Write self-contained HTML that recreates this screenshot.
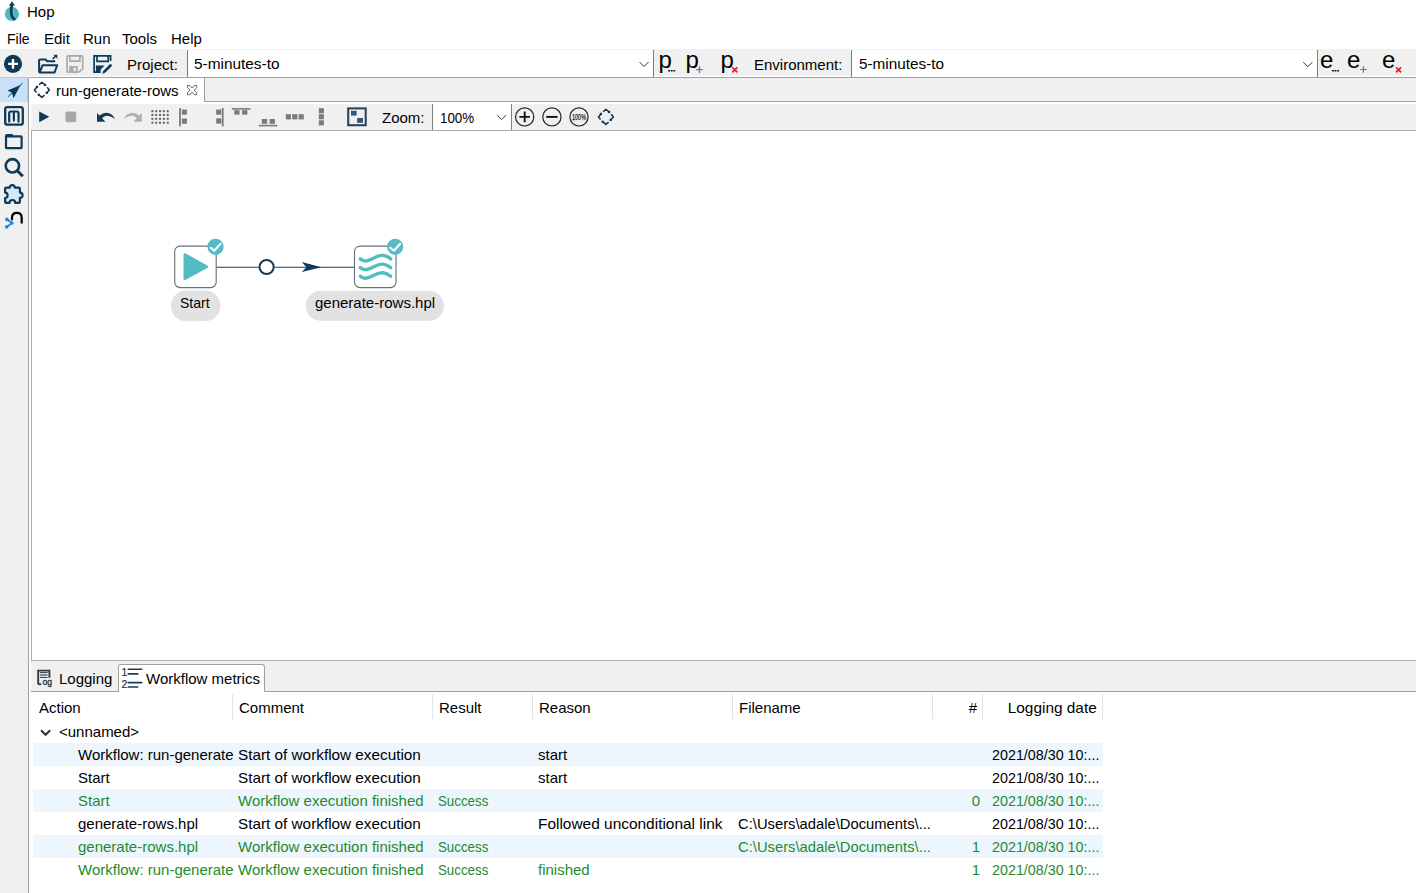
<!DOCTYPE html>
<html><head><meta charset="utf-8">
<style>
*{box-sizing:border-box}
html,body{margin:0;padding:0;width:1416px;height:893px;overflow:hidden;background:#fff;font-family:"Liberation Sans",sans-serif;font-size:15px;color:#000}
.a{position:absolute}
.t{position:absolute;white-space:pre;line-height:17px;font-size:15px;color:#000}
svg{position:absolute;overflow:visible}
.g{color:#1f8a30}
.big{position:absolute;white-space:pre;font-size:24px;line-height:28px;color:#000}
.rowb{position:absolute;left:33px;width:1070px;height:23px;background:#eef6fd}
.sep{position:absolute;top:694px;width:1px;height:25px;background:#e3e3e3}
.sx{transform-origin:0 0}
.clip{position:absolute;overflow:hidden;white-space:pre;height:23px}
</style></head><body>
<!-- ===== title bar ===== -->
<svg style="left:0;top:0" width="24" height="24" viewBox="0 0 24 24">
  <circle cx="11.9" cy="13.9" r="7.1" fill="#4fb9c2"/>
  <path d="M11.8 5 C11 9 10.9 13 11.8 16 C12.5 18 13.6 19 15.3 19.7" fill="none" stroke="#0e3a5a" stroke-width="2.5"/>
  <path d="M8.9 5.8 L12 1.3 L14.9 5.8 Z" fill="#0e3a5a"/>
</svg>
<div class="t" style="left:27px;top:3px">Hop</div>
<!-- ===== menu ===== -->
<div class="t" style="left:7px;top:30px;transform:scaleX(0.935);transform-origin:0 0">File</div>
<div class="t" style="left:44px;top:30px">Edit</div>
<div class="t" style="left:83px;top:30px">Run</div>
<div class="t" style="left:122px;top:30px">Tools</div>
<div class="t" style="left:171px;top:30px">Help</div>

<!-- ===== main toolbar ===== -->
<div class="a" style="left:0;top:49px;width:1416px;height:27px;background:#f0f0f0"></div>
<div class="a" style="left:187px;top:50px;width:467px;height:27px;background:#fff;border-left:1px solid #7d7d7d;border-right:1px solid #7d7d7d"></div>
<div class="a" style="left:851px;top:50px;width:467px;height:27px;background:#fff;border-left:1px solid #7d7d7d;border-right:1px solid #7d7d7d"></div>
<div class="t" style="left:127px;top:56px">Project:</div>
<div class="t" style="left:194px;top:55px;transform:scaleX(1.025);transform-origin:0 0">5-minutes-to</div>
<div class="t" style="left:754px;top:56px">Environment:</div>
<div class="t" style="left:858.5px;top:55px;transform:scaleX(1.02);transform-origin:0 0">5-minutes-to</div>
<svg style="left:0;top:49px" width="28" height="28" viewBox="0 49 28 28">
  <circle cx="13" cy="63.9" r="9.1" fill="#0e3a5a"/>
  <path d="M13 59 V68.8 M8.1 63.9 H17.9" stroke="#fff" stroke-width="2.4"/>
</svg>
<svg style="left:34px;top:50px" width="28" height="28" viewBox="34 50 28 28">
  <path d="M39.1 72.5 V60.3 Q39.1 59.4 40 59.4 H45.6 L47.2 61.3 H55.2" fill="none" stroke="#0e3a5a" stroke-width="2" stroke-linejoin="round"/>
  <path d="M42.6 65.2 H57.2 L54.6 72.5 H39.6 Z" fill="none" stroke="#0e3a5a" stroke-width="2" stroke-linejoin="round"/>
  <path d="M52.6 59 L56.2 55.6" stroke="#0e3a5a" stroke-width="1.6"/>
  <path d="M53.4 54.7 H57.4 V58.7 Z" fill="#0e3a5a"/>
</svg>
<svg style="left:62px;top:50px" width="28" height="28" viewBox="62 50 28 28">
  <path d="M67.1 56.8 Q67.1 55.9 68 55.9 H81.8 Q82.7 55.9 82.7 56.8 V68.9 L78.9 72 H67.1 Z" fill="none" stroke="#a8a8a8" stroke-width="1.6" stroke-linejoin="round"/>
  <path d="M70 55.9 V61.1 H79.9 V55.9" fill="none" stroke="#a8a8a8" stroke-width="1.6"/>
  <path d="M69.3 66 H77.8 V72.7 H69.3 Z" fill="#a8a8a8"/>
  <path d="M73.4 67.6 H76.2 V71.2 H73.4 Z" fill="#e6e6e6"/>
</svg>
<svg style="left:90px;top:50px" width="28" height="28" viewBox="90 50 28 28">
  <path d="M100.2 72.1 H94.1 V55.9 H110.6 V61" fill="none" stroke="#0e3a5a" stroke-width="1.7"/>
  <path d="M97 55.9 V61.3 H108.2 V55.9" fill="none" stroke="#0e3a5a" stroke-width="1.7"/>
  <path d="M95.9 65.6 H104.6 L100.6 69.8 V72.9 H95.9 Z" fill="#0e3a5a"/>
  <path d="M104.4 71.6 L110.5 65.5" stroke="#0e3a5a" stroke-width="2.7" stroke-linecap="round"/>
  <path d="M102.3 73.8 L103 71.2 L104.9 73.1 Z" fill="#0e3a5a"/>
</svg>
<svg style="left:636px;top:58px" width="14" height="12" viewBox="636 58 14 12">
  <path d="M639.5 62 L644 66.5 L648.5 62" fill="none" stroke="#333" stroke-width="1"/>
</svg>
<svg style="left:1300px;top:58px" width="14" height="12" viewBox="1300 58 14 12">
  <path d="M1303.3 62.2 L1307.8 66.7 L1312.3 62.2" fill="none" stroke="#333" stroke-width="1"/>
</svg>
<!-- p icons -->
<div class="big" style="left:658.5px;top:46px">p</div>
<div class="big" style="left:685.5px;top:46px">p</div>
<div class="big" style="left:720.5px;top:46px">p</div>
<div class="big" style="left:1320px;top:46px">e</div>
<div class="big" style="left:1347px;top:46px">e</div>
<div class="big" style="left:1382px;top:46px">e</div>
<svg style="left:660px;top:60px" width="90" height="16" viewBox="660 60 90 16">
  <path d="M668.2 70 h1.8 v1.6 h-1.8z M670.8 70 h1.8 v1.6 h-1.8z M673.4 70 h1.8 v1.6 h-1.8z" fill="#111"/>
  <path d="M699.5 66.3 V72.9 M696.2 69.6 H702.8" stroke="#5b7b95" stroke-width="1.2"/>
  <path d="M732.2 67.4 L737.4 72.4 M737.4 67.4 L732.2 72.4" stroke="#e0202f" stroke-width="1.7"/>
</svg>
<svg style="left:1320px;top:60px" width="90" height="16" viewBox="1320 60 90 16">
  <path d="M1332 70 h1.8 v1.6 h-1.8z M1334.6 70 h1.8 v1.6 h-1.8z M1337.2 70 h1.8 v1.6 h-1.8z" fill="#111"/>
  <path d="M1363.4 66.2 V72.8 M1360.1 69.5 H1366.7" stroke="#5b7b95" stroke-width="1.2"/>
  <path d="M1396 67.4 L1401.2 72.4 M1401.2 67.4 L1396 72.4" stroke="#e0202f" stroke-width="1.7"/>
</svg>

<!-- ===== perspective bar ===== -->
<div class="a" style="left:0;top:76px;width:28px;height:817px;background:#f0f0f0"></div>
<div class="a" style="left:28px;top:78px;width:1px;height:815px;background:#a0a0a0"></div>
<div class="a" style="left:0;top:77px;width:28px;height:25px;background:#c8e1f6;border-top:1px solid #a9cdec;border-right:1px solid #a9cdec"></div>
<svg style="left:0;top:77px" width="28" height="28" viewBox="0 77 28 28">
  <path d="M22.6 83 L7.9 96.9" stroke="#0e3a5a" stroke-width="0.9"/>
  <path d="M20.6 85 L7.5 90.5 L11.9 92.7 L13.5 98.3 Z" fill="#0e3a5a"/>
</svg>
<svg style="left:0;top:104px" width="28" height="126" viewBox="0 104 28 126">
  <rect x="5.2" y="107.1" width="17.6" height="17.5" rx="2.2" fill="none" stroke="#0e3a5a" stroke-width="2.3"/>
  <path d="M9.2 121.6 V113.2 Q9.2 111.5 10.9 111.5 H16.8 Q18.5 111.5 18.5 113.2 V121.6 M13.85 111.5 V120.6" fill="none" stroke="#0e3a5a" stroke-width="2.2" stroke-linecap="round"/>
  <path d="M6 136.5 V135.8 Q6 135 6.9 135 H11.8 L13 136.4 H21 Q21.6 136.4 21.6 137 V147.4 Q21.6 148.1 21 148.1 H6.7 Q6 148.1 6 147.4 Z" fill="none" stroke="#0e3a5a" stroke-width="2.2" stroke-linejoin="round"/>
  <path d="M6 136.4 H13" stroke="#0e3a5a" stroke-width="2.2"/>
  <circle cx="12.4" cy="165.8" r="6.7" fill="none" stroke="#0e3a5a" stroke-width="2.6"/>
  <path d="M17.4 170.8 L22.8 176.3" stroke="#0e3a5a" stroke-width="3"/>
  <path d="M9.8 187.6 Q9.8 185.2 12.3 185.2 Q14.8 185.2 14.8 187.6 H18.8 Q19.9 187.6 19.9 188.7 V192.6 Q22.6 192.6 22.6 195.2 Q22.6 197.8 19.9 197.8 V201.7 Q19.9 202.8 18.8 202.8 H15.2 Q15.2 200 12.4 200 Q9.6 200 9.6 202.8 H6.2 Q5.1 202.8 5.1 201.7 V198 Q7.6 198 7.6 195.3 Q7.6 192.6 5.1 192.6 V188.7 Q5.1 187.6 6.2 187.6 Z" fill="#d3e9f8" stroke="#0e3a5a" stroke-width="2.2" stroke-linejoin="round"/>
  <path d="M12 220.2 V217.6 Q12 212.9 16.9 212.9 Q21.7 212.9 21.7 217.6 V223.6" fill="none" stroke="#000" stroke-width="2.2"/>
  <path d="M6.9 219.4 L12 223 L6.7 226.9" fill="none" stroke="#1e88e5" stroke-width="1.9"/>
  <circle cx="6.9" cy="219.4" r="1.8" fill="#1e88e5"/>
  <circle cx="11.9" cy="223" r="1.7" fill="#1e88e5"/>
  <circle cx="6.7" cy="226.9" r="1.8" fill="#1e88e5"/>
</svg>

<!-- ===== tab folder ===== -->
<div class="a" style="left:29px;top:77px;width:1387px;height:1px;background:#a0a0a0"></div>
<div class="a" style="left:205px;top:78px;width:1211px;height:23px;background:#f0f0f0"></div>
<div class="a" style="left:204px;top:101px;width:1212px;height:1px;background:#a0a0a0"></div>
<div class="a" style="left:204px;top:78px;width:1px;height:24px;background:#a0a0a0"></div>
<svg style="left:33px;top:81px" width="18" height="18" viewBox="33 81 18 18">
  <path d="M39.1 84.8 L41.9 82.2 L44.8 84.8 M47.1 87.2 L49.4 90 L46.9 92.7 M44.6 95.1 L41.9 97.4 L38.9 94.9 M36.6 92.6 L34.4 90 L36.9 87" fill="none" stroke="#0e3a5a" stroke-width="1.5" stroke-linejoin="round"/>
  <rect x="43.9" y="83.8" width="2.3" height="2.3" fill="#0e3a5a"/><rect x="45.6" y="91.7" width="2.3" height="2.3" fill="#0e3a5a"/>
  <rect x="37.6" y="93.7" width="2.3" height="2.3" fill="#0e3a5a"/><rect x="35.8" y="85.8" width="2.3" height="2.3" fill="#0e3a5a"/>
</svg>
<div class="t" style="left:56px;top:82px">run-generate-rows</div>
<svg style="left:185px;top:83px" width="14" height="14" viewBox="185 83 14 14">
  <path d="M187.5 85.5 L189.7 85.5 L192.1 88 L194.5 85.5 L196.7 85.5 L196.7 87.6 L194.2 90.1 L196.7 92.6 L196.7 94.7 L194.5 94.7 L192.1 92.2 L189.7 94.7 L187.5 94.7 L187.5 92.6 L190 90.1 L187.5 87.6 Z" fill="none" stroke="#555" stroke-width="0.9" stroke-linejoin="round"/>
</svg>
<!-- ===== canvas toolbar ===== -->
<div class="a" style="left:31px;top:104px;width:1385px;height:26px;background:#f0f0f0"></div>
<div class="a" style="left:432px;top:104px;width:80px;height:26px;background:#fff;border-left:1px solid #7d7d7d;border-right:1px solid #7d7d7d"></div>
<div class="t" style="left:382px;top:109px">Zoom:</div>
<div class="t" style="left:440px;top:109px;transform:scaleX(0.89);transform-origin:0 0">100%</div>
<svg style="left:494px;top:111px" width="14" height="12" viewBox="494 111 14 12">
  <path d="M497.2 115.2 L501.6 119.6 L506 115.2" fill="none" stroke="#333" stroke-width="1"/>
</svg>
<svg style="left:31px;top:104px" width="600" height="26" viewBox="31 104 600 26">
  <path d="M39.2 111.4 L49.3 116.8 L39.2 122.2 Z" fill="#0e3a5a"/>
  <rect x="65.4" y="111.4" width="10.8" height="10.8" rx="2" fill="#a8a8a8"/>
  <path d="M97 113 L99.5 115.5 Q106 110.2 112.2 115 Q114.2 116.8 114.9 119.3 Q111.4 115.7 106.6 115.7 Q103.9 115.8 102.1 118.2 L105.5 121.7 L97 121.7 Z" fill="#0e3a5a"/>
  <path d="M141.8 113 L139.3 115.5 Q132.8 110.2 126.6 115 Q124.6 116.8 123.9 119.3 Q127.4 115.7 132.2 115.7 Q134.9 115.8 136.7 118.2 L133.3 121.7 L141.8 121.7 Z" fill="#b0b0b0"/>
  <g fill="#606060">
    <rect x="151.4" y="110.2" width="2" height="2"/><rect x="155.2" y="110.2" width="2" height="2"/><rect x="159" y="110.2" width="2" height="2"/><rect x="162.8" y="110.2" width="2" height="2"/><rect x="166.7" y="110.2" width="2" height="2"/>
    <rect x="151.4" y="114" width="2" height="2"/><rect x="155.2" y="114" width="2" height="2"/><rect x="159" y="114" width="2" height="2"/><rect x="162.8" y="114" width="2" height="2"/><rect x="166.7" y="114" width="2" height="2"/>
    <rect x="151.4" y="117.8" width="2" height="2"/><rect x="155.2" y="117.8" width="2" height="2"/><rect x="159" y="117.8" width="2" height="2"/><rect x="162.8" y="117.8" width="2" height="2"/><rect x="166.7" y="117.8" width="2" height="2"/>
    <rect x="151.4" y="121.7" width="2" height="2"/><rect x="155.2" y="121.7" width="2" height="2"/><rect x="159" y="121.7" width="2" height="2"/><rect x="162.8" y="121.7" width="2" height="2"/><rect x="166.7" y="121.7" width="2" height="2"/>
  </g>
  <g fill="#7a7a7a">
    <rect x="179.1" y="108" width="1.8" height="18.3"/><rect x="181.9" y="109.5" width="5" height="5.2"/><rect x="181.9" y="118.5" width="5" height="5.3"/>
    <rect x="221.8" y="108" width="1.8" height="18.3"/><rect x="216.2" y="109.5" width="5" height="5.2"/><rect x="216.2" y="118.3" width="5" height="5.3"/>
    <rect x="231.8" y="108.1" width="18.6" height="1.6"/><rect x="234.2" y="110.2" width="5.4" height="4.4"/><rect x="242" y="110.2" width="5.4" height="4.4"/>
    <rect x="258.8" y="124.8" width="18.6" height="1.6"/><rect x="261.8" y="119" width="5.4" height="4.8"/><rect x="269.6" y="119" width="5.4" height="4.8"/>
    <rect x="285.8" y="114.2" width="5.2" height="5.2"/><rect x="292.2" y="114.2" width="5.2" height="5.2"/><rect x="298.6" y="114.2" width="5.2" height="5.2"/>
    <rect x="318.8" y="108.2" width="5.1" height="5.1"/><rect x="318.8" y="114.2" width="5.1" height="5.1"/><rect x="318.8" y="120.3" width="5.1" height="5.1"/>
  </g>
  <rect x="348.2" y="108.4" width="17.5" height="16.8" fill="none" stroke="#2b4760" stroke-width="2.1"/>
  <rect x="351" y="110.8" width="5.6" height="4.8" fill="#2d5677"/>
  <rect x="357.2" y="118" width="5.8" height="4.8" fill="#2d5677"/>
  <circle cx="524.7" cy="116.9" r="9.1" fill="none" stroke="#222" stroke-width="1.2"/>
  <path d="M524.7 111.6 V122.2 M519.4 116.9 H530" stroke="#111" stroke-width="1.9"/>
  <circle cx="551.9" cy="116.9" r="9.1" fill="none" stroke="#222" stroke-width="1.2"/>
  <path d="M546.2 116.9 H557.6" stroke="#111" stroke-width="1.9"/>
  <circle cx="579" cy="116.9" r="9.1" fill="none" stroke="#222" stroke-width="1.2"/>
  <text x="579" y="119.8" font-family="Liberation Sans" font-size="8.6" text-anchor="middle" fill="#222" stroke="#222" stroke-width="0.25" textLength="14" lengthAdjust="spacingAndGlyphs">100%</text>
  <g transform="translate(564 27)"><path d="M39.1 84.8 L41.9 82.2 L44.8 84.8 M47.1 87.2 L49.4 90 L46.9 92.7 M44.6 95.1 L41.9 97.4 L38.9 94.9 M36.6 92.6 L34.4 90 L36.9 87" fill="none" stroke="#0e3a5a" stroke-width="1.5" stroke-linejoin="round"/>
  <rect x="43.9" y="83.8" width="2.3" height="2.3" fill="#0e3a5a"/><rect x="45.6" y="91.7" width="2.3" height="2.3" fill="#0e3a5a"/>
  <rect x="37.6" y="93.7" width="2.3" height="2.3" fill="#0e3a5a"/><rect x="35.8" y="85.8" width="2.3" height="2.3" fill="#0e3a5a"/></g>
</svg>

<!-- ===== canvas ===== -->
<div class="a" style="left:31px;top:130px;width:1385px;height:1px;background:#adadad"></div>
<div class="a" style="left:31px;top:130px;width:1px;height:531px;background:#adadad"></div>
<div class="a" style="left:31px;top:660px;width:1385px;height:1px;background:#adadad"></div>
<svg style="left:160px;top:230px" width="300" height="100" viewBox="160 230 300 100">
  <path d="M216.4 267.2 H258.7 M274.5 267.2 H354.2" stroke="#23405a" stroke-width="1.1"/>
  <circle cx="266.6" cy="267" r="7.1" fill="#fff" stroke="#173b57" stroke-width="2"/>
  <path d="M321.4 267.2 L301.8 262.1 L306.4 267.2 L301.8 272 Z" fill="#0e3a5a"/>
  <rect x="174.7" y="246.1" width="41.5" height="41.5" rx="5.5" fill="#fff" stroke="#66737f" stroke-width="1.15"/>
  <path d="M185 254.8 L185 278.4 L206.6 266.7 Z" fill="#52bcc3" stroke="#52bcc3" stroke-width="3" stroke-linejoin="round"/>
  <circle cx="215.5" cy="246.8" r="8.1" fill="#55bcc4"/>
  <path d="M210.6 247.8 L214.2 250.7 L220.6 243.8" fill="none" stroke="#fff" stroke-width="2.1" stroke-linecap="round" stroke-linejoin="round"/>
  <rect x="354.5" y="246.1" width="41.5" height="41.5" rx="5.5" fill="#fff" stroke="#66737f" stroke-width="1.15"/>
  <g fill="none" stroke="#52bcc3" stroke-width="3.4" stroke-linecap="round">
    <path d="M360.3 258.9 C362.5 260.8 364.5 261.2 366.8 260.8 C370 260.2 373 258.4 376 257 C379 255.6 381 255.3 383 255.4 C386 255.6 388.5 257 390.7 258.9"/>
    <path transform="translate(0 8.7)" d="M360.3 258.9 C362.5 260.8 364.5 261.2 366.8 260.8 C370 260.2 373 258.4 376 257 C379 255.6 381 255.3 383 255.4 C386 255.6 388.5 257 390.7 258.9"/>
    <path transform="translate(0 17.3)" d="M360.3 258.9 C362.5 260.8 364.5 261.2 366.8 260.8 C370 260.2 373 258.4 376 257 C379 255.6 381 255.3 383 255.4 C386 255.6 388.5 257 390.7 258.9"/>
  </g>
  <circle cx="395.2" cy="246.8" r="8.1" fill="#55bcc4"/>
  <path d="M390.3 247.8 L393.9 250.7 L400.3 243.8" fill="none" stroke="#fff" stroke-width="2.1" stroke-linecap="round" stroke-linejoin="round"/>
  <rect x="170.9" y="290.6" width="49.5" height="30.6" rx="15.3" fill="#e2e2e2"/>
  <rect x="305.8" y="290.8" width="138.1" height="30" rx="15" fill="#e2e2e2"/>
</svg>
<div class="t" style="left:180px;top:294px;transform:scaleX(0.935);transform-origin:0 0">Start</div>
<div class="t" style="left:315px;top:294px">generate-rows.hpl</div>

<!-- ===== bottom tabs ===== -->
<div class="a" style="left:31px;top:661px;width:1385px;height:30px;background:#f0f0f0"></div>
<div class="a" style="left:31px;top:691px;width:1385px;height:1px;background:#a0a0a0"></div>
<div class="a" style="left:118px;top:664px;width:147px;height:28px;background:#fff;border:1px solid #a0a0a0;border-bottom:none;border-radius:3px 3px 0 0"></div>
<svg style="left:32px;top:664px" width="28" height="28" viewBox="32 664 28 28">
  <path d="M38.2 684.2 V670.6 H49.4 V677.8" fill="none" stroke="#2f3b44" stroke-width="1.9"/>
  <path d="M38.2 684.2 H41.2" stroke="#2f3b44" stroke-width="1.9"/>
  <path d="M40 672.6 H47.6" stroke="#2b3a44" stroke-width="1"/>
  <path d="M40 675 H47.6" stroke="#6f8799" stroke-width="1.8"/>
  <path d="M40 677.4 H47.6" stroke="#2b3a44" stroke-width="1"/>
  <text x="42.5" y="684.9" font-family="Liberation Sans" font-size="8.6" fill="#2f3b44" stroke="#2f3b44" stroke-width="0.35" textLength="9.6" lengthAdjust="spacingAndGlyphs">og</text>
</svg>
<div class="t" style="left:59px;top:670px">Logging</div>
<svg style="left:118px;top:664px" width="28" height="28" viewBox="118 664 28 28">
  <text x="121.4" y="675.5" font-family="Liberation Sans" font-size="10.4" fill="#1d3548" stroke="#1d3548" stroke-width="0.2">1</text>
  <text x="121.4" y="688" font-family="Liberation Sans" font-size="10.4" fill="#1d3548" stroke="#1d3548" stroke-width="0.2">2</text>
  <path d="M128.2 669.3 H141.8 M128.2 682.6 H141.8" stroke="#1d3d57" stroke-width="1.6" stroke-linecap="round"/>
  <path d="M128.2 673.9 H137.8 M128.2 687 H137.8" stroke="#1d3d57" stroke-width="1.6" stroke-linecap="round"/>
</svg>
<div class="t" style="left:146px;top:670px">Workflow metrics</div>

<!-- ===== table ===== -->
<div class="sep" style="left:232px"></div>
<div class="sep" style="left:432px"></div>
<div class="sep" style="left:532px"></div>
<div class="sep" style="left:732px"></div>
<div class="sep" style="left:932px"></div>
<div class="sep" style="left:982px"></div>
<div class="sep" style="left:1102px"></div>
<div class="t" style="left:39px;top:699px">Action</div>
<div class="t" style="left:239px;top:699px">Comment</div>
<div class="t" style="left:439px;top:699px">Result</div>
<div class="t" style="left:539px;top:699px">Reason</div>
<div class="t" style="left:739px;top:699px">Filename</div>
<div class="t" style="right:439px;top:699px">#</div>
<div class="t" style="right:319px;top:699px;transform:scaleX(1.026);transform-origin:100% 0">Logging date</div>
<svg style="left:36px;top:724px" width="18" height="16" viewBox="36 724 18 16">
  <path d="M41 730.2 L45.6 734.8 L50.2 730.2" fill="none" stroke="#333" stroke-width="2"/>
</svg>
<div class="t" style="left:59px;top:723px">&lt;unnamed&gt;</div>
<div class="rowb" style="top:743px"></div>
<div class="rowb" style="top:789px"></div>
<div class="rowb" style="top:835px"></div>
<div class="t" style="left:78px;top:746px">Workflow: run-generate</div>
<div class="t" style="left:238px;top:746px;transform:scaleX(1.02);transform-origin:0 0">Start of workflow execution</div>
<div class="t" style="left:538px;top:746px">start</div>
<div class="t" style="left:992px;top:746px;transform:scaleX(0.954);transform-origin:0 0">2021/08/30 10:...</div>
<div class="t" style="left:78px;top:769px">Start</div>
<div class="t" style="left:238px;top:769px;transform:scaleX(1.02);transform-origin:0 0">Start of workflow execution</div>
<div class="t" style="left:538px;top:769px">start</div>
<div class="t" style="left:992px;top:769px;transform:scaleX(0.954);transform-origin:0 0">2021/08/30 10:...</div>
<div class="t g" style="left:78px;top:792px">Start</div>
<div class="t g" style="left:238px;top:792px">Workflow execution finished</div>
<div class="t g" style="left:438px;top:792px;transform:scaleX(0.887);transform-origin:0 0">Success</div>
<div class="t g" style="right:436px;top:792px">0</div>
<div class="t g" style="left:992px;top:792px;transform:scaleX(0.954);transform-origin:0 0">2021/08/30 10:...</div>
<div class="t" style="left:78px;top:815px">generate-rows.hpl</div>
<div class="t" style="left:238px;top:815px;transform:scaleX(1.02);transform-origin:0 0">Start of workflow execution</div>
<div class="t" style="left:538px;top:815px;transform:scaleX(1.029);transform-origin:0 0">Followed unconditional link</div>
<div class="t" style="left:738px;top:815px;transform:scaleX(0.985);transform-origin:0 0">C:\Users\adale\Documents\...</div>
<div class="t" style="left:992px;top:815px;transform:scaleX(0.954);transform-origin:0 0">2021/08/30 10:...</div>
<div class="t g" style="left:78px;top:838px">generate-rows.hpl</div>
<div class="t g" style="left:238px;top:838px">Workflow execution finished</div>
<div class="t g" style="left:438px;top:838px;transform:scaleX(0.887);transform-origin:0 0">Success</div>
<div class="t g" style="left:738px;top:838px;transform:scaleX(0.985);transform-origin:0 0">C:\Users\adale\Documents\...</div>
<div class="t g" style="right:436px;top:838px">1</div>
<div class="t g" style="left:992px;top:838px;transform:scaleX(0.954);transform-origin:0 0">2021/08/30 10:...</div>
<div class="t g" style="left:78px;top:861px">Workflow: run-generate</div>
<div class="t g" style="left:238px;top:861px">Workflow execution finished</div>
<div class="t g" style="left:438px;top:861px;transform:scaleX(0.887);transform-origin:0 0">Success</div>
<div class="t g" style="left:538px;top:861px">finished</div>
<div class="t g" style="right:436px;top:861px">1</div>
<div class="t g" style="left:992px;top:861px;transform:scaleX(0.954);transform-origin:0 0">2021/08/30 10:...</div>

</body></html>
